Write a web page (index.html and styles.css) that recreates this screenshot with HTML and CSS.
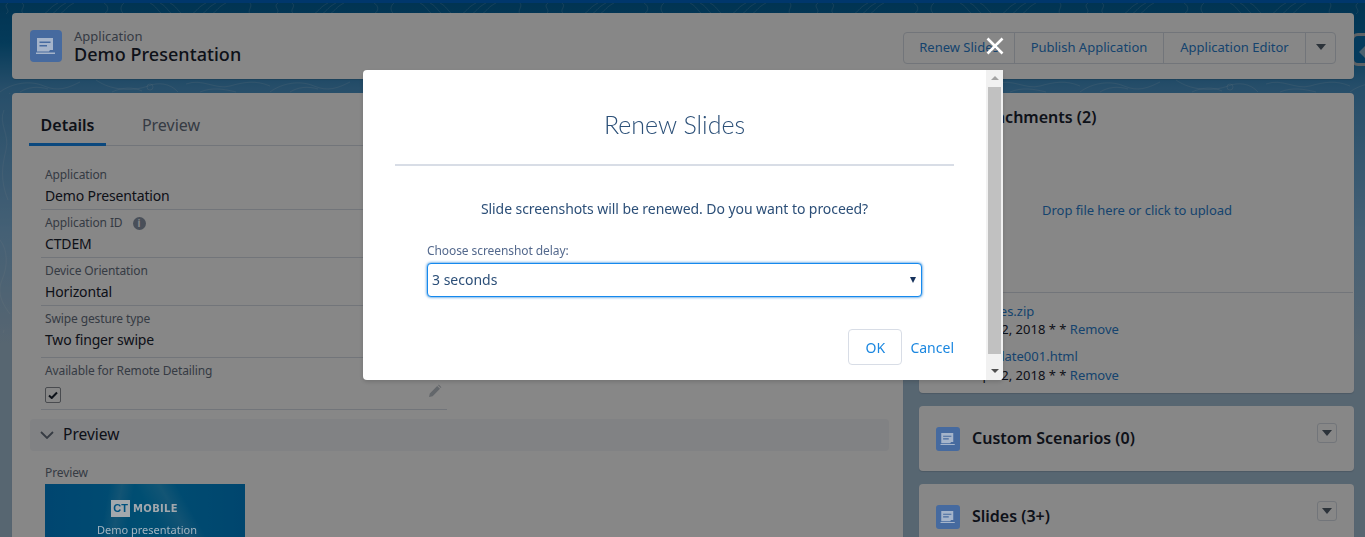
FILE: index.html
```html
<!DOCTYPE html>
<html lang="en">
<head>
<meta charset="utf-8">
<title>Demo Presentation</title>
<link rel="stylesheet" href="styles.css">
</head>
<body>
<div class="page">
  <svg class="contours" width="1365" height="537" aria-hidden="true">
    <defs>
      <pattern id="lines" width="270" height="537" patternUnits="userSpaceOnUse">
        <g fill="none" stroke="#fff" stroke-width="1" stroke-opacity=".14">
          <path d="M8 3c-6 4 4 7-2 11M22 3c5 4-4 7 2 11M58 3c-8 4-8 7-14 11M66 3c-8 4-8 7-14 11M74 3c-8 4-8 7-14 11M104 3c5 3 5 8 0 11M124 3c-4 3-4 8 0 11M150 3c6 3 8 8 12 11M160 3c6 3 8 8 12 11M170 3c6 3 8 8 12 11M206 3c-8 4-8 7-14 11M216 3c-8 4-8 7-14 11M226 3c-8 4-8 7-14 11M250 3c3 4-3 7 0 11"/>
          <path d="M0 92c12-9 30-12 44-6s24 2 36-4M20 92c8-5 18-6 28-3M96 80c14 10 36 12 52 6 10-4 22-3 30 6M112 92c10-5 22-5 30-1M186 84c16-6 30 6 44 2s26-6 40 0M200 92c12-5 24-3 36 0"/>
          <circle cx="150" cy="87" r="3"/>
        </g>
      </pattern>
      <pattern id="sides" width="12" height="220" patternUnits="userSpaceOnUse">
        <path d="M0 20c8 10 8 26 2 40s2 26 8 34M4 110c-6 14 6 24 2 40s-6 30 2 50" fill="none" stroke="#fff" stroke-opacity=".12"/>
      </pattern>
    </defs>
    <rect width="1365" height="93" fill="url(#lines)"/>
    <rect y="93" width="12" height="240" fill="url(#sides)"/>
  </svg>

  <div class="dock"><span class="dock-arrow"></span></div>

  <header class="card head">
    <svg class="obj-icon obj-icon-lg" viewBox="0 0 32 32" aria-hidden="true">
      <rect width="32" height="32" rx="4" class="obj-bg"/>
      <path class="obj-fg" d="M7 8h16v12h-3l-1 1.500H7zM6 22.500h19V24H6z"/>
      <path class="obj-line" d="M9.500 11.500h11V13h-11zM9.500 15H17v1.500H9.500z"/>
    </svg>
    <div class="head-titles">
      <div class="head-kicker">Application</div>
      <h1 class="head-title">Demo Presentation</h1>
    </div>
    <div class="btn-group">
      <a class="btn btn-renew">Renew Slides</a>
      <a class="btn btn-publish">Publish Application</a>
      <a class="btn btn-editor">Application Editor</a>
      <a class="btn btn-more"><span class="caret"></span></a>
    </div>
  </header>

  <div class="columns">
    <main class="card main">
      <nav class="tabs">
        <a class="tab tab-active">Details</a>
        <a class="tab">Preview</a>
      </nav>
      <div class="fields">
        <div class="field">
          <div class="field-label">Application</div>
          <div class="field-value">Demo Presentation</div>
        </div>
        <div class="field">
          <div class="field-label">Application ID <span class="info">i</span></div>
          <div class="field-value">CTDEM</div>
        </div>
        <div class="field">
          <div class="field-label">Device Orientation</div>
          <div class="field-value">Horizontal</div>
        </div>
        <div class="field field-tall">
          <div class="field-label">Swipe gesture type</div>
          <div class="field-value">Two finger swipe</div>
        </div>
        <div class="field field-tall">
          <div class="field-label">Available for Remote Detailing</div>
          <div class="field-check">
            <span class="checkbox">
              <svg width="10" height="8" viewBox="0 0 10 8" aria-hidden="true"><path d="M1 4.500l2.700 2.500L9 1.500" fill="none" stroke="#1a2230" stroke-width="2"/></svg>
            </span>
            <svg class="pencil" width="14" height="14" viewBox="0 0 14 14" aria-hidden="true"><path d="M1 13l.8-3.600 7.400-7.400 2.800 2.800-7.400 7.400zM10 1.200l.8-.6 2.600 2.600-.6.800z" fill="#bcc2ca"/></svg>
          </div>
        </div>
      </div>
      <div class="section-head">
        <svg width="14" height="8" viewBox="0 0 14 8" aria-hidden="true"><path d="M1 1l6 6 6-6" fill="none" stroke="#66707f" stroke-width="1.800"/></svg>
        <span class="section-name">Preview</span>
      </div>
      <div class="preview-label">Preview</div>
      <div class="thumb">
        <div class="thumb-logo"><span class="thumb-ct">CT</span><span class="thumb-mobile">MOBILE</span></div>
        <div class="thumb-text">Demo presentation</div>
      </div>
    </main>

    <aside class="side">
      <section class="card attach">
        <h2 class="attach-title">Attachments (2)</h2>
        <div class="drop">Drop file here or click to upload</div>
        <div class="files">
          <div class="file file-first"><a class="link">images.zip</a></div>
          <div class="file-meta">Sep 12, 2018 * * <a class="link">Remove</a></div>
          <div class="file file-next"><a class="link">template001.html</a></div>
          <div class="file-meta">Sep 12, 2018 * * <a class="link">Remove</a></div>
        </div>
      </section>
      <section class="card related">
        <svg class="obj-icon" viewBox="0 0 32 32" aria-hidden="true">
          <rect width="32" height="32" rx="4" class="obj-bg"/>
          <path class="obj-fg" d="M7 8h16v12h-3l-1 1.500H7zM6 22.500h19V24H6z"/>
          <path class="obj-line" d="M9.500 11.500h11V13h-11zM9.500 15H17v1.500H9.500z"/>
        </svg>
        <h2 class="related-title">Custom Scenarios (0)</h2>
        <span class="mini-btn"><span class="caret"></span></span>
      </section>
      <section class="card related">
        <svg class="obj-icon" viewBox="0 0 32 32" aria-hidden="true">
          <rect width="32" height="32" rx="4" class="obj-bg"/>
          <path class="obj-fg" d="M7 8h16v12h-3l-1 1.500H7zM6 22.500h19V24H6z"/>
          <path class="obj-line" d="M9.500 11.500h11V13h-11zM9.500 15H17v1.500H9.500z"/>
        </svg>
        <h2 class="related-title">Slides (3+)</h2>
        <span class="mini-btn"><span class="caret"></span></span>
      </section>
    </aside>
  </div>
</div>

<div class="backdrop"></div>

<svg class="close" width="18" height="18" viewBox="0 0 18 18" aria-label="Close"><path d="M1.500 1.500l15 15M16.500 1.500l-15 15" stroke="#fff" stroke-width="2.600" fill="none"/></svg>

<div class="modal" role="dialog">
  <div class="modal-body">
    <h2 class="modal-title">Renew Slides</h2>
    <hr class="modal-rule">
    <p class="modal-msg">Slide screenshots will be renewed. Do you want to proceed?</p>
    <div class="form">
      <label class="form-label">Choose screenshot delay:</label>
      <div class="select-wrap">
        <select class="select"><option>3 seconds</option></select>
      </div>
    </div>
    <div class="actions">
      <button class="ok">OK</button>
      <a class="cancel">Cancel</a>
    </div>
  </div>
  <div class="scrollbar">
    <span class="sb-up"></span>
    <span class="sb-thumb"></span>
    <span class="sb-down"></span>
  </div>
</div>
</body>
</html>
```
FILE: styles.css
```css
* { box-sizing: border-box; }
html, body { margin: 0; height: 537px; overflow: hidden; }
body { font-family: "Noto Sans", "Open Sans", sans-serif; color: #1a2230; font-size: 14px; }
h1, h2, p { margin: 0; }

.page {
  position: relative;
  height: 537px;
  overflow: hidden;
  padding: 10px 11px 0 12px;
  border-top: 3px solid #0068cc;
  background: linear-gradient(#02629c 0, #0a70aa 40px, #4a94c8 85px, #82b6de 230px, #a4c0d6 340px, #a4c0d6 100%);
}
.contours { position: absolute; left: 0; top: -3px; }

.dock {
  position: absolute; left: 1351px; top: 30px; width: 30px; height: 33px;
  border: 3px solid #b4b9bf; border-radius: 7px; background: #0a70b0;
}
.dock-arrow {
  position: absolute; left: 5px; top: 8px;
  border: 8px solid transparent; border-left: 0; border-right: 8px solid #8fb8d2;
}

.card {
  position: relative;
  background: #fff;
  border-radius: 4px;
  box-shadow: 0 1px 1px rgba(0,0,0,.12);
}

.head { display: flex; align-items: center; height: 66px; padding: 0 18px 0 18px; }
.obj-icon { position: relative; z-index: 2; width: 24px; height: 24px; flex: none; }
.obj-icon-lg { width: 32px; height: 32px; }
.obj-bg { fill: #466a9f; }
.obj-fg { fill: #a5b4ca; }
.obj-line { fill: #466a9f; }
.head-titles { margin-left: 12px; }
.head-kicker { font-size: 13px; line-height: 16px; color: #66707f; }
.head-title { font-size: 18px; line-height: 20px; font-weight: 500; color: #1a2230; letter-spacing: .05px; }

.btn-group {
  display: flex; margin-left: auto; height: 32px; margin-top: 4px;
  border: 1px solid #d8dde6; border-radius: 4px;
}
.btn {
  display: flex; align-items: center; justify-content: center; padding-bottom: 2px;
  font-size: 13px; color: #2a7fd0; border-right: 1px solid #d8dde6; white-space: nowrap;
}
.btn-renew { width: 111px; }
.btn-publish { width: 149px; }
.btn-editor { width: 142px; }
.btn-more { width: 29px; border-right: 0; }
.caret { display: block; border: 5px solid transparent; border-top: 6px solid #54606f; border-bottom: 0; width: 0; }

.columns { display: grid; grid-template-columns: 891px 435px; gap: 16px; margin-top: 14px; }

.main { height: 460px; padding: 12px 14px 0 17px; }
.tabs { display: flex; height: 41px; border-bottom: 1px solid #d8dde6; margin-right: 2px; }
.tab {
  width: 77px; height: 41px; text-align: center; line-height: 41px;
  font-size: 16px; color: #66707f; margin-right: 35px;
}
.tab-active { font-weight: 600; color: #1a2230; border-bottom: 3px solid #1589ee; }
.tab:nth-child(2) { width: 60px; }

.fields { width: 406px; margin: 16px 0 0 12px; }
.field { height: 48px; padding: 4px 4px 0; border-bottom: 1px solid #d8dde6; }
.field-tall { height: 52px; }
.field-label { font-size: 12px; line-height: 18px; color: #66707f; display: flex; align-items: center; gap: 5px; letter-spacing: -.12px; }
.field-value { font-size: 14px; line-height: 22px; margin-top: 1px; color: #1a2230; letter-spacing: -.15px; }
.info {
  width: 13px; height: 13px; border-radius: 50%; background: #8a96a8; color: #fff;
  font-size: 10px; font-weight: 700; line-height: 13px; text-align: center; margin-left: 5px;
}
.field-check { display: flex; justify-content: space-between; align-items: center; margin-top: 7px; padding-right: 1px; }
.checkbox {
  width: 16px; height: 16px; border: 1px solid #8a8f96; border-radius: 2px; background: #fff;
  display: flex; align-items: center; justify-content: center;
}
.pencil { margin-top: -8px; }

.section-head {
  display: flex; align-items: center; gap: 9px; height: 32px; margin: 9px 0 0 1px; padding-left: 10px; width: 859px;
  background: #f4f6f9; border-radius: 4px; font-size: 15.500px; color: #1a2230;
}
.section-name { padding-bottom: 2px; }
.preview-label { font-size: 12px; line-height: 18px; color: #66707f; margin: 13px 0 2px 16px; letter-spacing: -.1px; }
.thumb {
  width: 200px; height: 80px; margin-left: 16px; padding-top: 16px; overflow: hidden; text-align: center;
  background:
    linear-gradient(100deg, transparent 30%, rgba(255,255,255,.14) 36%, transparent 42%),
    linear-gradient(60deg, transparent 55%, rgba(255,255,255,.14) 65%, transparent 72%),
    linear-gradient(90deg, #0084d4, #0094d8 50%, #0084d0);
}
.thumb-logo { position: relative; z-index: 2; display: flex; align-items: center; justify-content: center; gap: 3px; padding-right: 1px; }
.thumb-ct { width: 19px; height: 17px; background: #a3a8ad; color: #00517f; font: 700 11px/17px "Liberation Sans", sans-serif; }
.thumb-mobile { font: 700 10px/17px "DejaVu Sans", sans-serif; letter-spacing: .3px; color: #a3a8ad; }
.thumb-text { position: relative; z-index: 2; font-size: 11px; line-height: 16px; margin-top: 5px; padding-left: 4px; color: #a3b4c0; }

.side { display: flex; flex-direction: column; gap: 13px; }
.attach { height: 300px; }
.attach-title {
  position: absolute; left: 53px; top: 14px;
  font-size: 16px; line-height: 20px; font-weight: 600; color: #1a2230;
}
.drop { height: 200px; padding: 107px 0 0 2px; text-align: center; font-size: 13px; line-height: 20px; color: #2a7fd0; border-bottom: 1px solid #d8dde6; margin-right: 1px; letter-spacing: -.05px; }
.files { padding: 9px 0 0 49px; font-size: 13px; line-height: 19px; color: #1a2230; }
.file { margin-left: 1px; }
.file-first { line-height: 18px; }
.file-next { margin-top: 8px; }
.link { color: #2a7fd0; }

.related { height: 65px; display: flex; align-items: center; padding: 0 17px; }
.related-title { margin-left: 12px; padding-bottom: 2px; font-size: 16px; font-weight: 600; color: #1a2230; }
.mini-btn {
  margin-left: auto; width: 20px; height: 20px; margin-top: -11px;
  border: 1px solid #d8dde6; border-radius: 3px;
  display: flex; align-items: center; justify-content: center;
}

.backdrop { position: fixed; inset: 0; z-index: 1; background: rgba(0,0,0,.47); }
.close { position: fixed; z-index: 3; left: 986px; top: 37px; }

.modal {
  position: fixed; z-index: 3; left: 363px; top: 70px; width: 640px; height: 310px;
  display: flex; background: #fff; border-radius: 4px 0 4px 4px; overflow: hidden;
  box-shadow: 0 2px 4px rgba(0,0,0,.16);
}
.modal-body { flex: 1; padding: 39px 32px 0; }
.modal-title { font-family: "Lato", sans-serif; font-size: 25px; line-height: 30px; font-weight: 300; text-align: center; color: #2c5078; }
.modal-rule { height: 2px; border: 0; margin: 25px 0 0; background: #d8dde6; }
.modal-msg { margin-top: 33px; text-align: center; font-size: 14px; line-height: 20px; color: #2c4f78; letter-spacing: -.07px; }
.form { margin: 24px 0 0 32px; width: 495px; }
.form-label { display: block; font-size: 12px; line-height: 16px; color: #54698d; letter-spacing: -.08px; }
.select-wrap { position: relative; margin-top: 4px; }
.select-wrap::after {
  content: ""; position: absolute; right: 6px; top: 14px;
  border: 3.500px solid transparent; border-top: 6px solid #16325c; border-bottom: 0;
}
.select {
  display: block; width: 100%; height: 34px; padding: 0 4px 2px; appearance: none; background: #fff;
  border: 1px solid #1589ee; border-radius: 4px; box-shadow: 0 0 3px #0070d2; outline: 0;
  font: 14px "Noto Sans", sans-serif; color: #2c4f78;
}
.actions { display: flex; justify-content: flex-end; align-items: center; margin-top: 32px; gap: 8px; }
.ok {
  width: 54px; height: 36px; background: #fff; border: 1px solid #d8dde6; border-radius: 4px;
  font: 14px "Noto Sans", sans-serif; color: #1b87e0; padding: 0;
}
.cancel { font-size: 14px; color: #1b87e0; }

.scrollbar {
  width: 17px; background: #f1f1f1; display: flex; flex-direction: column; align-items: center; flex: none;
}
.sb-up { margin-top: 6px; border: 4px solid transparent; border-bottom: 4px solid #a3a3a3; border-top: 0; }
.sb-thumb { width: 13px; height: 267px; margin-top: 7px; background: #c1c1c1; }
.sb-down { margin-top: 15px; border: 4px solid transparent; border-top: 4px solid #505050; border-bottom: 0; }
```
